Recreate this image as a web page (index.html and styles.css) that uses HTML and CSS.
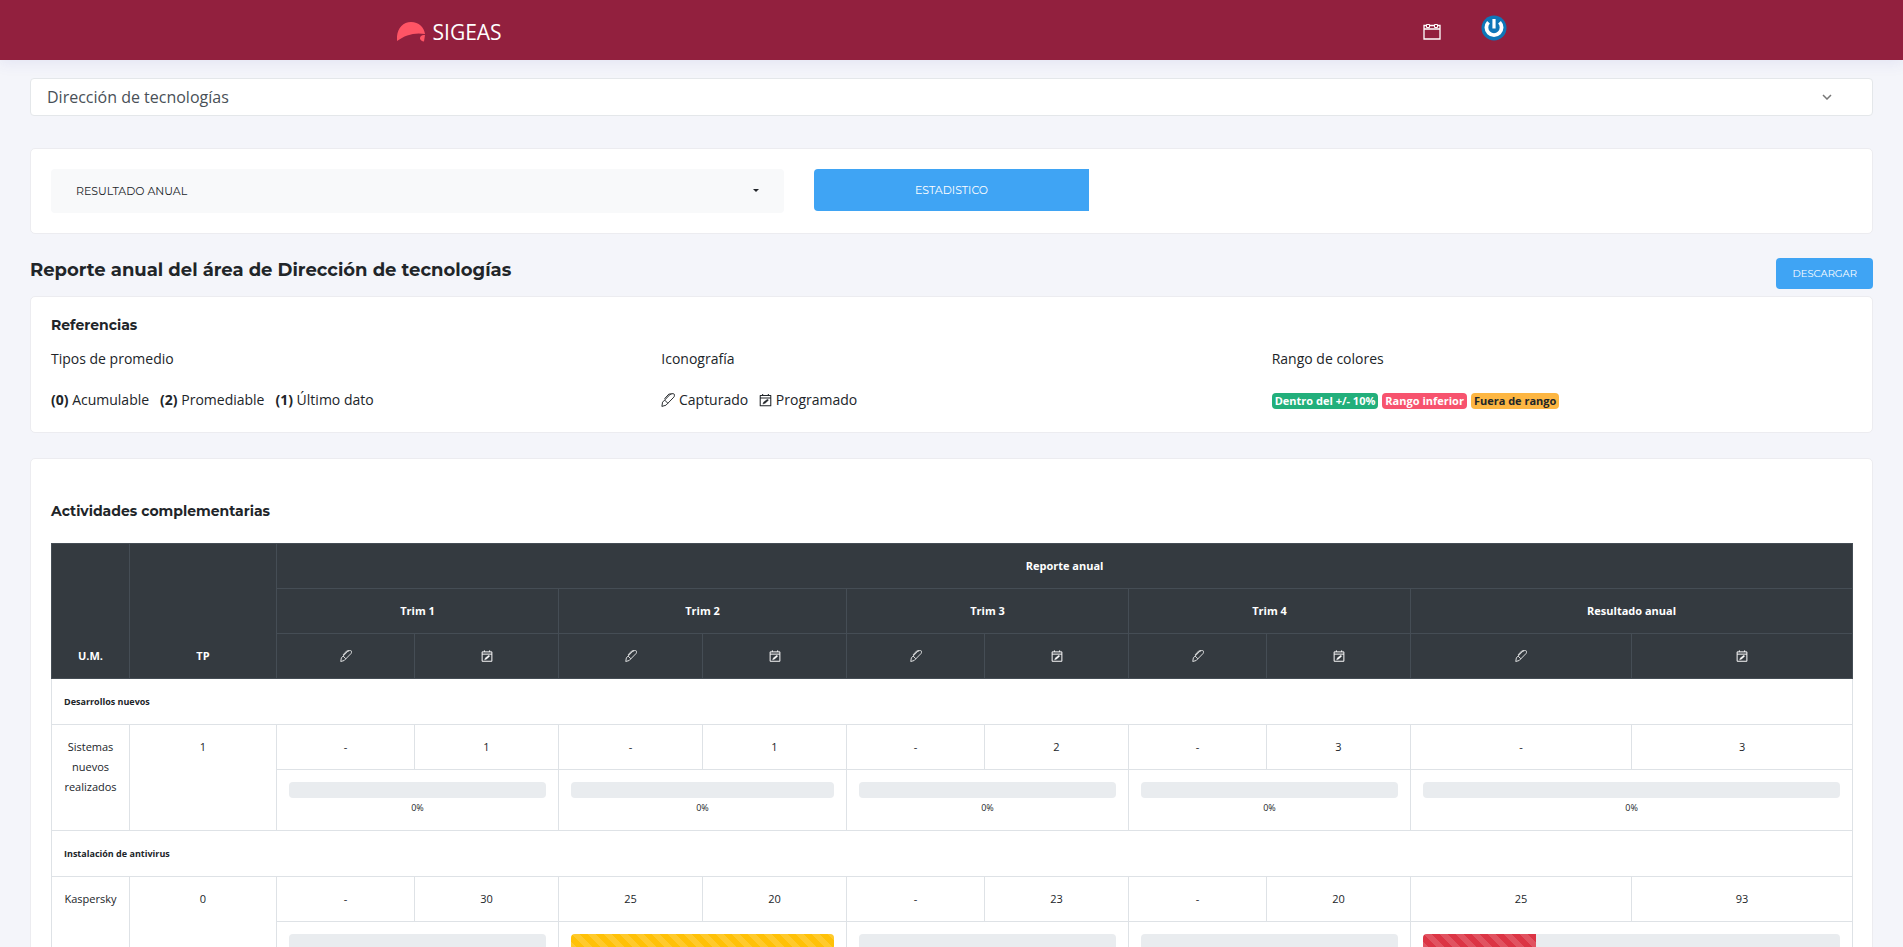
FILE: index.html
```html
<!DOCTYPE html>
<html lang="es">
<head>
<meta charset="utf-8">
<meta name="viewport" content="width=device-width, initial-scale=1">
<title>SIGEAS - Reporte anual</title>
<link rel="stylesheet" href="styles.css">
</head>
<body>
<svg class="sprite" aria-hidden="true">
  <symbol id="pen" viewBox="0 0 16 16">
    <path d="M1 15.300l.8-4.800L10.500 1.600Q11.300.8 12.300.8H14q1.300 0 1.300 1.300v1.100q0 .8-.6 1.500L5.600 14zM4.200 8.100l3.600 3.600M4 6.600L9 1.200h3" fill="none" stroke="currentColor" stroke-width="1.100" stroke-linejoin="round"/>
  </symbol>
  <symbol id="calendar-edit" viewBox="0 0 16 16">
    <path d="M1.500 2.500h13v12.500h-13zM1.500 5.500h13M4.500.5v2M11.500.5v2" fill="none" stroke="currentColor" stroke-width="1.300" stroke-linejoin="round"/>
    <path d="M4.800 13l1-2.500L10.500 7l1.200 1.200L7.500 12z" fill="currentColor" stroke="currentColor" stroke-width=".5"/>
  </symbol>
</svg>

<header class="navbar">
  <div class="navbar-inner">
    <a class="brand" href="#">
      <svg class="brand-mark" viewBox="0 0 28 20" aria-hidden="true">
        <path d="M0 19C-1 8 5 0 14 0c8 0 13 5 14 12-10-2-20 1-28 7z" fill="#ff5465"/>
        <path d="M28 13c-3-.5-5 1-5 3.500 0 1.500 2 3 4 3z" fill="#ff5465"/>
      </svg>
      <span>SIGEAS</span>
    </a>
    <nav class="navbar-actions">
      <a href="#" aria-label="Calendario">
        <svg class="nav-calendar" viewBox="0 0 18 16" aria-hidden="true">
          <path d="M1 1.500h16v13.500H1zM1 5h16" fill="none" stroke="#fff" stroke-width="1.300"/>
          <path d="M3.500.5h3v3h-3zM11.500.5h3v3h-3z" fill="#92203e" stroke="#fff"/>
        </svg>
      </a>
      <button class="avatar" type="button" aria-label="Cuenta">
        <svg viewBox="0 0 26 26" aria-hidden="true">
          <circle cx="13" cy="13" r="12.500" fill="#0e76b8"/>
          <path d="M7.500 7.200A7.600 7.600 0 1 0 18.500 7.200" fill="none" stroke="#fff" stroke-width="3.800"/>
          <path d="M13 4v9.500" stroke="#0e76b8" stroke-width="5"/>
          <path d="M13 4v9.500" stroke="#fff" stroke-width="3.200"/>
        </svg>
      </button>
    </nav>
  </div>
</header>

<main class="page">
  <div class="select-wrap area-wrap">
    <select class="area-select" aria-label="Área"><option>Dirección de tecnologías</option></select>
    <svg class="chevron" viewBox="0 0 10 6" aria-hidden="true"><path d="M1 1l4 4 4-4" fill="none" stroke="#777" stroke-width="1.500"/></svg>
  </div>

  <section class="card filters">
    <div class="select-wrap">
      <select class="report-select" aria-label="Tipo de reporte"><option>RESULTADO ANUAL</option></select>
      <svg class="caret" viewBox="0 0 6 3" aria-hidden="true"><path d="M0 0h6L3 3z" fill="#212529"/></svg>
    </div>
    <button class="btn btn-stat" type="button">ESTADISTICO</button>
  </section>

  <div class="title-row">
    <h1>Reporte anual del área de Dirección de tecnologías</h1>
    <button class="btn btn-download" type="button">DESCARGAR</button>
  </div>

  <section class="card references">
    <h2>Referencias</h2>
    <div class="reference-grid">
      <div>
        <p>Tipos de promedio</p>
        <ul class="inline-list">
          <li><b>(0)</b> Acumulable</li>
          <li><b>(2)</b> Promediable</li>
          <li><b>(1)</b> Último dato</li>
        </ul>
      </div>
      <div>
        <p>Iconografía</p>
        <ul class="inline-list">
          <li><svg class="icon"><use href="#pen"/></svg> Capturado</li>
          <li><svg class="icon icon-calendar"><use href="#calendar-edit"/></svg> Programado</li>
        </ul>
      </div>
      <div>
        <p>Rango de colores</p>
        <div class="badges">
          <span class="badge badge-ok">Dentro del +/- 10%</span>
          <span class="badge badge-low">Rango inferior</span>
          <span class="badge badge-out">Fuera de rango</span>
        </div>
      </div>
    </div>
  </section>

  <section class="card activities">
    <h2>Actividades complementarias</h2>
    <table class="report">
      <colgroup>
        <col class="col-unit"><col class="col-type">
        <col class="col-narrow"><col class="col-wide">
        <col class="col-wide"><col class="col-wide">
        <col class="col-narrow"><col class="col-wide">
        <col class="col-narrow"><col class="col-wide">
        <col class="col-total"><col class="col-total">
      </colgroup>
      <thead>
        <tr><th rowspan="3">U.M.</th><th rowspan="3">TP</th><th colspan="10">Reporte anual</th></tr>
        <tr><th colspan="2">Trim 1</th><th colspan="2">Trim 2</th><th colspan="2">Trim 3</th><th colspan="2">Trim 4</th><th colspan="2">Resultado anual</th></tr>
        <tr>
          <th><svg class="icon-small"><use href="#pen"/></svg></th><th><svg class="icon-small"><use href="#calendar-edit"/></svg></th>
          <th><svg class="icon-small"><use href="#pen"/></svg></th><th><svg class="icon-small"><use href="#calendar-edit"/></svg></th>
          <th><svg class="icon-small"><use href="#pen"/></svg></th><th><svg class="icon-small"><use href="#calendar-edit"/></svg></th>
          <th><svg class="icon-small"><use href="#pen"/></svg></th><th><svg class="icon-small"><use href="#calendar-edit"/></svg></th>
          <th><svg class="icon-small"><use href="#pen"/></svg></th><th><svg class="icon-small"><use href="#calendar-edit"/></svg></th>
        </tr>
      </thead>
      <tbody>
        <tr><td class="group" colspan="12">Desarrollos nuevos</td></tr>
        <tr><td rowspan="2">Sistemas nuevos realizados</td><td rowspan="2">1</td><td>-</td><td>1</td><td>-</td><td>1</td><td>-</td><td>2</td><td>-</td><td>3</td><td>-</td><td>3</td></tr>
        <tr>
          <td colspan="2"><div class="progress"></div><div class="percent">0%</div></td>
          <td colspan="2"><div class="progress"></div><div class="percent">0%</div></td>
          <td colspan="2"><div class="progress"></div><div class="percent">0%</div></td>
          <td colspan="2"><div class="progress"></div><div class="percent">0%</div></td>
          <td colspan="2"><div class="progress"></div><div class="percent">0%</div></td>
        </tr>
        <tr><td class="group" colspan="12">Instalación de antivirus</td></tr>
        <tr><td rowspan="2">Kaspersky</td><td rowspan="2">0</td><td>-</td><td>30</td><td>25</td><td>20</td><td>-</td><td>23</td><td>-</td><td>20</td><td>25</td><td>93</td></tr>
        <tr>
          <td colspan="2"><div class="progress"></div></td>
          <td colspan="2"><div class="progress"><div class="bar bar-warning" style="width:100%"></div></div></td>
          <td colspan="2"><div class="progress"></div></td>
          <td colspan="2"><div class="progress"></div></td>
          <td colspan="2"><div class="progress"><div class="bar bar-danger" style="width:27%"></div></div></td>
        </tr>
      </tbody>
    </table>
  </section>
</main>
</body>
</html>
```
FILE: styles.css
```css
* { box-sizing: border-box; }
html { scrollbar-width: none; }
body {
  margin: 0;
  background: #f4f5fa;
  color: #212529;
  font: 14px/24px "Open Sans", "Noto Sans", sans-serif;
}
h1, h2, p, ul { margin: 0; padding: 0; }
h1, h2 { font-family: Montserrat, Inter, sans-serif; font-weight: 700; }
.sprite { position: absolute; width: 0; height: 0; }

.navbar {
  background: #92203e;
  box-shadow: 0 1px 15px 1px rgba(69, 65, 178, 0.1);
}
.navbar-inner {
  display: flex;
  align-items: center;
  justify-content: space-between;
  max-width: 1140px;
  height: 60px;
  margin: 0 auto;
  padding: 0 15px;
}
.brand {
  display: flex;
  align-items: center;
  gap: 8px;
  padding-top: 4px;
  color: #fff;
  font-size: 21px;
  text-decoration: none;
}
.brand-mark { width: 28px; height: 20px; }
.navbar-actions { display: flex; align-items: center; gap: 40px; }
.navbar-actions a { display: flex; padding-top: 4px; }
.nav-calendar { width: 18px; height: 16px; }
.avatar {
  width: 26px;
  height: 26px;
  margin-bottom: 4px;
  padding: 0;
  border: 0;
  background: none;
}
.avatar svg { display: block; }

.page { padding: 18px 30px 30px; }
.card {
  background: #fff;
  border: 1px solid #ececf0;
  border-radius: 5px;
}
.select-wrap { position: relative; }
select { appearance: none; width: 100%; border-radius: 4px; }
.area-wrap { margin-bottom: 32px; }
.area-select {
  display: block;
  height: 38px;
  padding: 0 16px;
  border: 1px solid #e4e7ea;
  background: #fff;
  color: #495057;
  font: 16px/24px "Open Sans", sans-serif;
}
.chevron { position: absolute; right: 41px; top: 16px; width: 10px; height: 6px; }
.caret { position: absolute; right: 25px; top: 20px; width: 6px; height: 3px; }

.filters {
  display: grid;
  grid-template-columns: 733fr 275fr 753fr;
  column-gap: 30px;
  align-items: start;
  padding: 20px 0 20px 20px;
}
.report-select {
  display: block;
  height: 44px;
  padding: 0 25px;
  border: 0;
  background: #f8f9fa;
  color: #212529;
  font: 11px/20px Montserrat, Inter, sans-serif;
}
.btn {
  border: 0;
  border-radius: 4px;
  background: #3fa4f4;
  color: #fff;
  font: 11px/20px Montserrat, Inter, sans-serif;
}
.btn-stat { height: 42px; border-radius: 4px 0 0 4px; }
.btn-download { height: 31px; padding: 0 16px; font-size: 10px; }

.title-row {
  display: flex;
  justify-content: space-between;
  align-items: flex-start;
  margin: 24px 0 7px;
}
.title-row h1 { font-size: 18px; line-height: 24px; }

h2 { font-size: 14px; line-height: 20px; }
.references { padding: 18px 20px; margin-bottom: 25px; }
.reference-grid {
  display: grid;
  grid-template-columns: repeat(3, 1fr);
  column-gap: 30px;
  padding-top: 12px;
}
.reference-grid p { margin-bottom: 17px; }
.inline-list { display: flex; gap: 11px; list-style: none; }
.icon { width: 14px; height: 14px; vertical-align: -2px; }
.icon-calendar { width: 13px; }
.badges { display: flex; align-items: center; gap: 4px; height: 26px; }
.badge {
  padding: 0 3px;
  border-radius: 4px;
  font-size: 11px;
  line-height: 16px;
  font-weight: 700;
  color: #fff;
}
.badge-ok { background: #22af7b; }
.badge-low { background: #f7536e; }
.badge-out { background: #fdb642; color: #212529; }

.activities { padding: 42px 21px 20px 20px; }
.activities h2 { margin-bottom: 22px; }
.report {
  width: 100%;
  table-layout: fixed;
  border-collapse: collapse;
  font-size: 11px;
  line-height: 20px;
}
.col-unit { width: 78px; }
.col-type { width: 147px; }
.col-narrow { width: 138px; }
.col-wide { width: 144px; }
.col-total { width: 221px; }
.report th, .report td {
  padding: 12px;
  text-align: center;
  vertical-align: top;
  border: 1px solid #dee2e6;
}
.report th {
  background: #343a40;
  border-color: #454d55;
  color: #fff;
  vertical-align: bottom;
}
.report .group { padding-top: 13px; font-size: 9px; font-weight: 700; text-align: left; }
.icon-small { display: block; width: 12px; height: 12px; margin: 4px auto; }
.progress {
  height: 16px;
  overflow: hidden;
  border-radius: 4px;
  background: #e9ecef;
}
.bar {
  height: 100%;
  background-image: linear-gradient(45deg, rgba(255,255,255,.15) 25%, transparent 25%, transparent 50%, rgba(255,255,255,.15) 50%, rgba(255,255,255,.15) 75%, transparent 75%, transparent);
  background-size: 16px 16px;
}
.bar-warning { background-color: #ffc107; }
.bar-danger { background-color: #dc3545; }
.percent { font-size: 9px; line-height: 20px; }
```
